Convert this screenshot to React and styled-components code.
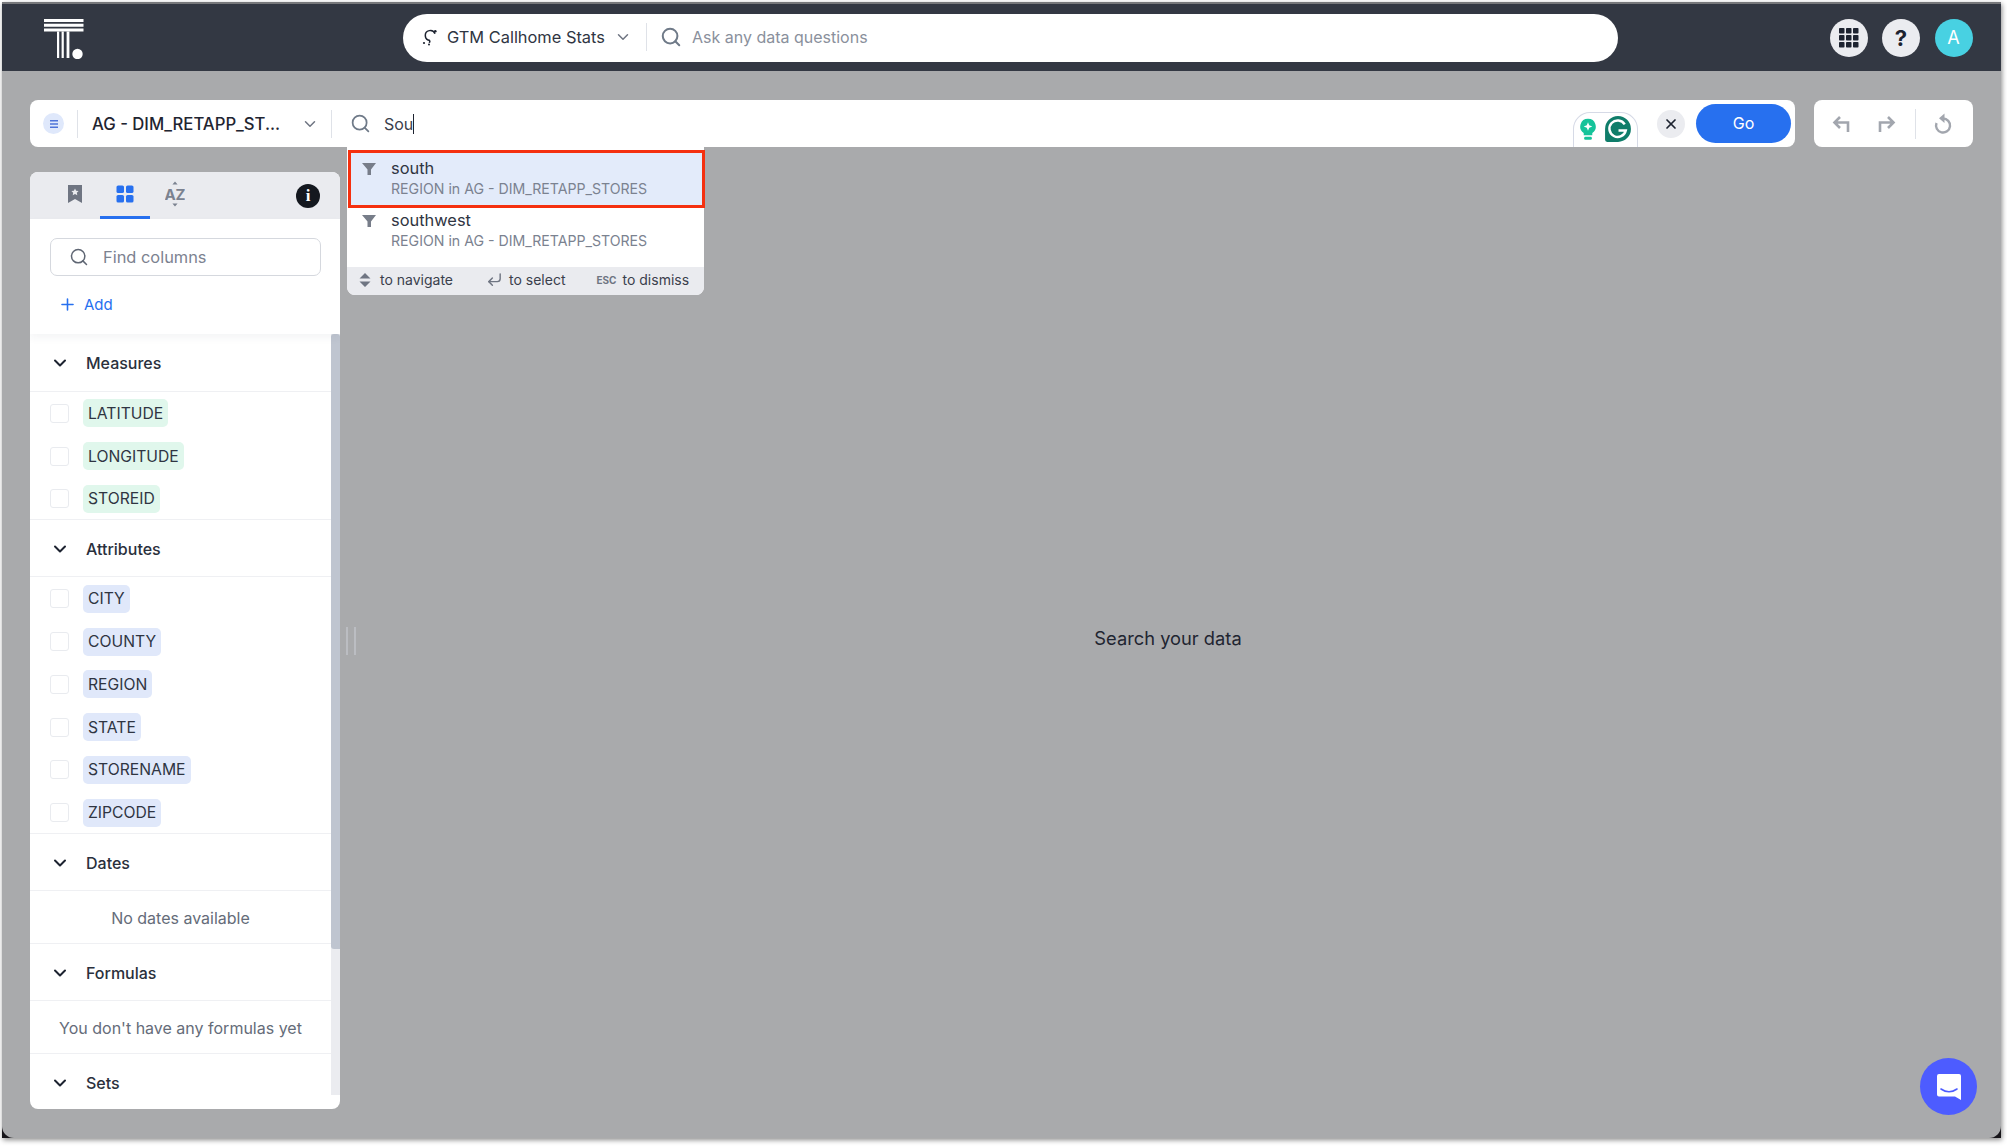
import React from 'react'
import styled, { createGlobalStyle, css } from 'styled-components'
import { Search, ChevronDown, X, CornerDownLeft, Plus } from 'lucide-react'

const Global = createGlobalStyle`
  html, body { margin: 0; padding: 0; background: #fff; }
  body { font-family: Inter, "Noto Sans", sans-serif; color: #2a303c; }
  * { box-sizing: border-box; }
`
const Page = styled.div`
  width: 2007px;
  height: 1146px;
  padding: 2px 6px 8px 2px;
  overflow: hidden;
`
const Window = styled.div`
  position: relative;
  height: 100%;
  background: #17151a;
  box-shadow: 1px 2px 5px rgba(0, 0, 0, 0.45);
  display: flex;
  flex-direction: column;
`
const Header = styled.header`
  height: 69px;
  flex: none;
  background: #333843;
  border-top: 2px solid #77787b;
  display: flex;
  align-items: center;
  padding: 0 28.5px 0 42px;
`
const Logo = styled.svg`
  width: 40px;
  height: 40px;
  flex: none;
  margin: 2px 319px 0 0;
`
const Pill = styled.div`
  width: 1215px;
  height: 48px;
  border-radius: 24px;
  background: #fff;
  display: flex;
  align-items: center;
  padding: 0 0 1px 18px;
`
const SourceName = styled.span`
  font-size: 16.4px;
  margin: 0 9px 0 8px;
  color: #2f3542;
`
const Rule = styled.span`
  width: 1px;
  height: ${p => p.$h || 28}px;
  background: #dfe2e8;
  flex: none;
`
const Placeholder = styled.span`
  font-size: 16px;
  color: #8a909c;
  margin-left: 10px;
`
const HeaderIcons = styled.div`
  margin-left: auto;
  display: flex;
  gap: 14.5px;
`
const RoundBtn = styled.div`
  width: 38px;
  height: 38px;
  border-radius: 50%;
  background: ${p => p.$bg || '#ebecf0'};
  color: ${p => p.$fg || '#1d2330'};
  display: flex;
  align-items: center;
  justify-content: center;
  font-size: ${p => p.$fs || 20}px;
  font-weight: ${p => p.$fw || 700};
`
const Body = styled.main`
  flex: 1;
  min-height: 0;
  background: #a9aaac;
  border-radius: 0 0 12px 12px;
  padding: 29px 28px 29px 28px;
  display: flex;
  flex-direction: column;
  gap: 25px;
`
const BarRow = styled.div`
  display: flex;
  gap: 19px;
  height: 47px;
  flex: none;
`
const QueryBar = styled.div`
  position: relative;
  flex: 1;
  background: #fff;
  border-radius: 8px;
  display: flex;
  align-items: center;
  padding-left: 13px;
`
const SourceDot = styled.span`
  width: 21px;
  height: 21px;
  border-radius: 50%;
  background: #dfe8fb;
  flex: none;
  display: flex;
  align-items: center;
  justify-content: center;
  margin-right: 13px;
`
const WorksheetName = styled.span`
  font-size: 16.7px;
  font-weight: 500;
  width: 187px;
  margin: 0 22px 0 14px;
  white-space: nowrap;
  color: #1f2531;
`
const QueryText = styled.span`
  font-size: 16px;
  color: #3a404c;
  margin-left: 13px;
  border-right: 1.5px solid #1d2330;
  line-height: 20px;
`
const ClearBtn = styled.div`
  width: 28px;
  height: 28px;
  border-radius: 50%;
  background: #ebecf0;
  color: #1d2330;
  display: flex;
  align-items: center;
  justify-content: center;
  margin-left: auto;
  margin-right: 11px;
`
const GoBtn = styled.div`
  width: 95px;
  height: 39px;
  border-radius: 20px;
  background: #2770ef;
  color: #fff;
  font-size: 16px;
  padding-bottom: 1px;
  display: flex;
  align-items: center;
  justify-content: center;
  margin-right: 4px;
`
const Grammarly = styled.div`
  position: absolute;
  left: 1543px;
  top: 12px;
  width: 65px;
  height: 35px;
  background: #fff;
  border: 1px solid #d6dae6;
  border-bottom: none;
  border-radius: 17px 17px 0 0;
  display: flex;
  align-items: center;
  justify-content: center;
  gap: 7px;
`
const ActionBox = styled.div`
  width: 159px;
  background: #fff;
  border-radius: 8px;
  display: flex;
  align-items: center;
  padding-left: 18px;
  color: #a2a6ae;
`
const Spacer = styled.span`
  width: ${p => p.$w}px;
  flex: none;
`
const Dropdown = styled.div`
  position: absolute;
  left: 317px;
  top: 47px;
  width: 357px;
  height: 148px;
  background: #fff;
  border-radius: 0 0 8px 8px;
  display: flex;
  flex-direction: column;
  z-index: 5;
`
const Suggestion = styled.div`
  height: 58px;
  margin-left: ${p => (p.$active ? 1 : 0)}px;
  margin-right: ${p => (p.$active ? -1 : 0)}px;
  margin-top: ${p => (p.$active ? 3 : 0)}px;
  padding: ${p => (p.$active ? '5.5px 0 0 10px' : '3px 0 0 14px')};
  background: ${p => (p.$active ? '#e3ebfa' : '#fff')};
  border: ${p => (p.$active ? '3px solid #f5300f' : 'none')};
  display: flex;
  gap: 14px;
  flex: none;
`
const SuggestText = styled.div`
  display: flex;
  flex-direction: column;
  gap: 2px;
`
const SuggestTitle = styled.span`
  font-size: 16.4px;
  line-height: 19px;
  color: #2f3542;
`
const SuggestSub = styled.span`
  font-size: 14.15px;
  line-height: 18px;
  color: #7b8290;
  white-space: nowrap;
`
const Hints = styled.div`
  margin-top: auto;
  height: 28px;
  background: #eaebef;
  border-radius: 0 0 8px 8px;
  display: flex;
  align-items: center;
  padding: 0 0 3px 11px;
  font-size: 14px;
  color: #3a404c;
`
const Esc = styled.span`
  font-size: 10px;
  font-weight: 700;
  color: #6f7582;
  margin-right: 6px;
`
const Work = styled.div`
  flex: 1;
  min-height: 0;
  display: flex;
`
const Sidebar = styled.aside`
  width: 310px;
  flex: none;
  background: #fff;
  border-radius: 8px;
  overflow: hidden;
  display: flex;
  flex-direction: column;
`
const TabBar = styled.div`
  height: 47px;
  flex: none;
  background: #eaebef;
  display: flex;
  padding: 0 20px;
  align-items: stretch;
`
const Tab = styled.div`
  width: 50px;
  display: flex;
  align-items: center;
  justify-content: center;
  border-bottom: 3px solid ${p => (p.$active ? '#2770ef' : 'transparent')};
`
const InfoIcon = styled.span`
  width: 24px;
  height: 24px;
  border-radius: 50%;
  background: #14181f;
  color: #fff;
  margin: auto 0 auto auto;
  font: 700 17px "Liberation Serif", serif;
  display: flex;
  align-items: center;
  justify-content: center;
`
const Tools = styled.div`
  height: 115px;
  flex: none;
  padding: 19px 19px 0 20px;
  box-shadow: 0 4px 8px rgba(40, 50, 70, 0.05);
  position: relative;
`
const FindBox = styled.div`
  height: 38px;
  border: 1px solid #d5d8de;
  border-radius: 7px;
  display: flex;
  align-items: center;
  padding-left: 18px;
  gap: 14px;
  font-size: 16.4px;
  color: #7c8290;
`
const AddLink = styled.div`
  display: flex;
  align-items: center;
  gap: 7px;
  margin: 19px 0 0 8px;
  font-size: 15px;
  color: #2770ef;
`
const Scroller = styled.div`
  flex: 1;
  min-height: 0;
  display: flex;
`
const List = styled.div`
  flex: 1;
  min-width: 0;
  overflow: hidden;
`
const SectionHead = styled.div`
  height: ${p => p.$h || 58}px;
  display: flex;
  align-items: center;
  gap: 16px;
  padding-left: 20px;
  font-size: 16px;
  font-weight: 500;
  color: #2a303c;
  box-shadow: inset 0 -1px 0 #eff0f3;
`
const Rows = styled.div`
  box-shadow: inset 0 -1px 0 #eff0f3;
`
const Row = styled.div`
  height: 42.8px;
  display: flex;
  align-items: center;
  gap: 14px;
  padding-left: 20px;
`
const Check = styled.span`
  width: 19px;
  height: 19px;
  border: 1px solid #e9ebef;
  border-radius: 3px;
  flex: none;
`
const Chip = styled.span`
  height: 28px;
  display: flex;
  align-items: center;
  padding: 0 5px;
  border-radius: 5px;
  font-size: 15.7px;
  color: #2f3542;
  ${p => (p.$kind === 'measure'
    ? css`background: #e0f7ec;`
    : css`background: #e0e8fa;`)}
`
const Empty = styled.div`
  height: 53px;
  display: flex;
  align-items: center;
  justify-content: center;
  font-size: 16px;
  color: #656c79;
  box-shadow: inset 0 -1px 0 #eff0f3;
`
const Track = styled.div`
  width: 9px;
  flex: none;
  background: #ebecf0;
  margin-bottom: 14px;
`
const Thumb = styled.div`
  height: 615px;
  background: #bfc5d0;
  border-radius: 3px 3px 0 3px;
`
const Handle = styled.div`
  width: 21px;
  flex: none;
  display: flex;
  align-items: center;
  justify-content: center;
  gap: 6px;
  &::before, &::after {
    content: '';
    width: 2px;
    height: 28px;
    background: #bbbdc2;
  }
`
const Canvas = styled.div`
  flex: 1;
  display: flex;
  align-items: center;
  justify-content: center;
  font-size: 18.3px;
  color: #1f2531;
  padding: 0 0 5px 2px;
`
const Chat = styled.div`
  position: absolute;
  right: 24px;
  bottom: 23px;
  width: 57px;
  height: 57px;
  border-radius: 50%;
  background: #4d5cff;
  display: flex;
  align-items: center;
  justify-content: center;
`

const measures = ['LATITUDE', 'LONGITUDE', 'STOREID']
const attributes = ['CITY', 'COUNTY', 'REGION', 'STATE', 'STORENAME', 'ZIPCODE']

const Funnel = () => (
  <svg width="16" height="16" viewBox="0 0 16 16" style={{ flex: 'none', marginTop: 2 }}>
    <path d="M1 2h14L10 8.5V14H6.5V8.5z" fill="#777d89" />
  </svg>
)

const Section = ({ title, h }) => (
  <SectionHead $h={h}>
    <ChevronDown size={20} strokeWidth={2.4} color="#1d2330" />
    {title}
  </SectionHead>
)

const FieldRows = ({ items, kind }) => (
  <Rows>
    {items.map(name => (
      <Row key={name}>
        <Check />
        <Chip $kind={kind}>{name}</Chip>
      </Row>
    ))}
  </Rows>
)

export default function App() {
  return (
    <Page>
      <Global />
      <Window>
        <Header>
          <Logo viewBox="0 0 40 40">
            <path d="M0 0h39.5v3H0zM0 4.7h39.5v3H0zM0 9.5h39.5v3H0z" fill="#fff" />
            <path d="M13 12.5h2.2V39H13zM17.6 12.5h2.2V39h-2.2zM22.6 12.5h2.8V39h-2.8z" fill="#fff" />
            <circle cx="33.5" cy="35" r="5.2" fill="#fff" />
          </Logo>
          <Pill>
            <svg width="18" height="18" viewBox="0 0 18 18" fill="none" stroke="#1d2330" strokeWidth="1.5">
              <path d="M14 5.8a5 5 0 1 0-5 6.7" />
              <path d="M9 12.5l-.6 2.4" />
              <circle cx="14.3" cy="3.2" r="1.3" fill="#1d2330" stroke="none" />
              <circle cx="3" cy="15" r="1.1" fill="#1d2330" stroke="none" />
              <circle cx="8" cy="16.5" r="1" fill="#1d2330" stroke="none" />
            </svg>
            <SourceName>GTM Callhome Stats</SourceName>
            <ChevronDown size={18} color="#6f7582" />
            <Spacer $w={14} />
            <Rule $h={28} />
            <Spacer $w={13} />
            <Search size={22} color="#6f7a88" strokeWidth={2.2} />
            <Placeholder>Ask any data questions</Placeholder>
          </Pill>
          <HeaderIcons>
            <RoundBtn>
              <svg width="22" height="22" viewBox="0 0 22 22" fill="#1d2330">
                {[1, 8, 15].flatMap(y => [1, 8, 15].map(x => <rect key={`${x}-${y}`} x={x} y={y} width="5.5" height="5.5" rx="0.8" />))}
              </svg>
            </RoundBtn>
            <RoundBtn $fs={22}>?</RoundBtn>
            <RoundBtn $bg="#48d1e2" $fg="#fff" $fw={400} $fs={18}>A</RoundBtn>
          </HeaderIcons>
        </Header>
        <Body>
          <BarRow>
            <QueryBar>
              <SourceDot>
                <svg width="10" height="10" viewBox="0 0 10 10" fill="#4f74d9">
                  <path d="M1 1h8v1.5H1zM1 4.3h8v1.5H1zM1 7.6h8v1.5H1z" />
                </svg>
              </SourceDot>
              <Rule $h={28} />
              <WorksheetName>AG - DIM_RETAPP_ST...</WorksheetName>
              <ChevronDown size={18} color="#6f7582" />
              <Spacer $w={12} />
              <Rule $h={28} />
              <Spacer $w={18} />
              <Search size={21} color="#6f7a88" strokeWidth={2} />
              <QueryText>Sou</QueryText>
              <ClearBtn><X size={16} strokeWidth={2.6} /></ClearBtn>
              <GoBtn>Go</GoBtn>
              <Grammarly>
                <svg width="18" height="24" viewBox="0 0 20 28">
                  <path d="M10 1a9 9 0 0 0-5 16.5V20h10v-2.5A9 9 0 0 0 10 1z" fill="#15c39a" />
                  <path d="M10 5l1.4 3.6L15 10l-3.6 1.4L10 15l-1.4-3.6L5 10l3.6-1.4z" fill="#fff" />
                  <rect x="5.5" y="22" width="9" height="3.5" rx="1.5" fill="#15c39a" />
                </svg>
                <svg width="28" height="30" viewBox="0 0 27 29">
                  <path d="M13.5 1a12.5 12.5 0 0 1 0 25H3a2 2 0 0 1-2-2V13.5A12.5 12.5 0 0 1 13.5 1z" fill="#0f7d6a" />
                  <path d="M20 9a8 8 0 1 0 1 6h-7" fill="none" stroke="#fff" strokeWidth="2.4" />
                </svg>
              </Grammarly>
              <Dropdown>
                <Suggestion $active>
                  <Funnel />
                  <SuggestText>
                    <SuggestTitle>south</SuggestTitle>
                    <SuggestSub>REGION in AG - DIM_RETAPP_STORES</SuggestSub>
                  </SuggestText>
                </Suggestion>
                <Suggestion>
                  <Funnel />
                  <SuggestText>
                    <SuggestTitle>southwest</SuggestTitle>
                    <SuggestSub>REGION in AG - DIM_RETAPP_STORES</SuggestSub>
                  </SuggestText>
                </Suggestion>
                <Hints>
                  <svg width="14" height="16" viewBox="0 0 14 16" fill="#6f7582">
                    <path d="M7 1l5.5 5.5h-11zM7 15L1.5 9.5h11z" />
                  </svg>
                  <Spacer $w={8} />
                  to navigate
                  <Spacer $w={33} />
                  <CornerDownLeft size={17} color="#6f7582" />
                  <Spacer $w={6} />
                  to select
                  <Spacer $w={31} />
                  <Esc>ESC</Esc>
                  to dismiss
                </Hints>
              </Dropdown>
            </QueryBar>
            <ActionBox>
              <svg width="20" height="20" viewBox="0 0 20 20" fill="none" stroke="currentColor" strokeWidth="2.6">
                <path d="M16 18V8.5H3M8 3L2.5 8.5 8 14" />
              </svg>
              <Spacer $w={24} />
              <svg width="20" height="20" viewBox="0 0 20 20" fill="none" stroke="currentColor" strokeWidth="2.6">
                <path d="M4 18V8.5h13M12 3l5.5 5.5L12 14" />
              </svg>
              <Spacer $w={19} />
              <Rule $h={30} />
              <Spacer $w={18} />
              <svg width="20" height="22" viewBox="0 0 20 22" fill="none" stroke="currentColor" strokeWidth="2.4">
                <path d="M9 5.5a7 7 0 1 1-6.5 4.5" />
                <path d="M10.5 0.5v9.5L5 5.3z" fill="currentColor" stroke="none" />
              </svg>
            </ActionBox>
          </BarRow>
          <Work>
            <Sidebar>
              <TabBar>
                <Tab>
                  <svg width="16" height="20" viewBox="0 0 16 20">
                    <path d="M1 1h14v18l-7-4-7 4z" fill="#6f7582" />
                    <path d="M8 4.5l1.1 2.3 2.5.3-1.8 1.7.5 2.5L8 10l-2.3 1.3.5-2.5-1.8-1.7 2.5-.3z" fill="#eaebef" />
                  </svg>
                </Tab>
                <Tab $active>
                  <svg width="18" height="18" viewBox="0 0 18 18" fill="#2770ef">
                    <rect x="0.5" y="0.5" width="7.5" height="7.5" rx="1.6" />
                    <rect x="10" y="0.5" width="7.5" height="7.5" rx="1.6" />
                    <rect x="0.5" y="10" width="7.5" height="7.5" rx="1.6" />
                    <rect x="10" y="10" width="7.5" height="7.5" rx="1.6" />
                  </svg>
                </Tab>
                <Tab>
                  <svg width="20" height="26" viewBox="0 0 20 26" fill="#7b8290">
                    <path d="M10 0.5l2.6 3H7.4zM10 25.5l2.6-3H7.4z" />
                    <text x="10" y="19" textAnchor="middle" fontFamily="Inter, sans-serif" fontWeight="700" fontSize="15">AZ</text>
                  </svg>
                </Tab>
                <InfoIcon>i</InfoIcon>
              </TabBar>
              <Tools>
                <FindBox>
                  <Search size={20} color="#5f6673" strokeWidth={1.8} />
                  Find columns
                </FindBox>
                <AddLink>
                  <Plus size={19} />
                  Add
                </AddLink>
              </Tools>
              <Scroller>
                <List>
                  <Section title="Measures" />
                  <FieldRows items={measures} kind="measure" />
                  <Section title="Attributes" h={57} />
                  <FieldRows items={attributes} kind="attribute" />
                  <Section title="Dates" h={57} />
                  <Empty>No dates available</Empty>
                  <Section title="Formulas" h={57} />
                  <Empty>You don't have any formulas yet</Empty>
                  <Section title="Sets" />
                </List>
                <Track><Thumb /></Track>
              </Scroller>
            </Sidebar>
            <Handle />
            <Canvas>Search your data</Canvas>
          </Work>
        </Body>
        <Chat>
          <svg width="26" height="28" viewBox="0 0 26 28">
            <path d="M3 1h20a2 2 0 0 1 2 2v24l-6-3.5H3a2 2 0 0 1-2-2V3a2 2 0 0 1 2-2z" fill="#fff" />
            <path d="M5 16c5 3.5 11 3.5 16 0" fill="none" stroke="#4d5cff" strokeWidth="1.6" strokeLinecap="round" />
          </svg>
        </Chat>
      </Window>
    </Page>
  )
}
